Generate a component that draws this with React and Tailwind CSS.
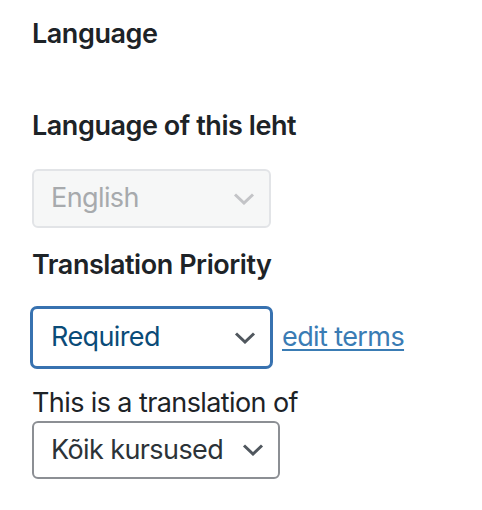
import React from "react";

function Chevron({ color }) {
  return (
    <svg width="22" height="12" viewBox="0 0 22 12" fill="none">
      <path d="M2 1.5 L11 10 L20 1.5" stroke={color} strokeWidth="3" strokeLinecap="butt" strokeLinejoin="miter" />
    </svg>
  );
}

export default function App() {
  return (
    <div className="min-h-[510px] w-[482px] bg-white pl-[32px] pt-[17px] text-[#1d2327]" style={{ fontFamily: "Inter, 'Noto Sans', sans-serif" }}>
      <h2 className="text-[27px] font-semibold leading-[34px] tracking-[-0.45px]">Language</h2>
      <h3 className="mt-[58px] text-[27px] font-semibold leading-[34px] tracking-[-0.45px]">Language of this leht</h3>
      <div className="mt-[26px] flex h-[59px] w-[239px] items-center justify-between rounded-[6px] border-2 border-[#e2e4e7] bg-[#f6f7f7] pl-[17px] pr-[14px] text-[27px] tracking-[-0.6px] text-[#a7aaad]">
        <span>English</span>
        <Chevron color="#c3c4c7" />
      </div>
      <h3 className="mt-[20px] text-[27px] font-semibold leading-[34px] tracking-[-0.45px]">Translation Priority</h3>
      <div className="mt-[24px] flex items-center">
        <div className="-ml-[2px] flex h-[63px] w-[243px] items-center justify-between rounded-[7px] border-[3px] border-[#3872b0] bg-white pl-[18px] pr-[14px] text-[27px] tracking-[-0.6px] text-[#0a4b78]">
          <span>Required</span>
          <Chevron color="#50575e" />
        </div>
        <a href="#" className="ml-[9px] text-[27px] tracking-[-0.6px] text-[#3a7cb4] underline decoration-2 underline-offset-[3px]">edit terms</a>
      </div>
      <p className="mt-[17px] text-[27px] leading-[34px] tracking-[-0.6px]">This is a translation of</p>
      <div className="mt-[1px] flex h-[58px] w-[248px] items-center justify-between rounded-[6px] border-2 border-[#8c8f94] bg-white pl-[17px] pr-[14px] text-[27px] tracking-[-0.6px] text-[#2c3338]">
        <span>Kõik kursused</span>
        <Chevron color="#50575e" />
      </div>
    </div>
  );
}
